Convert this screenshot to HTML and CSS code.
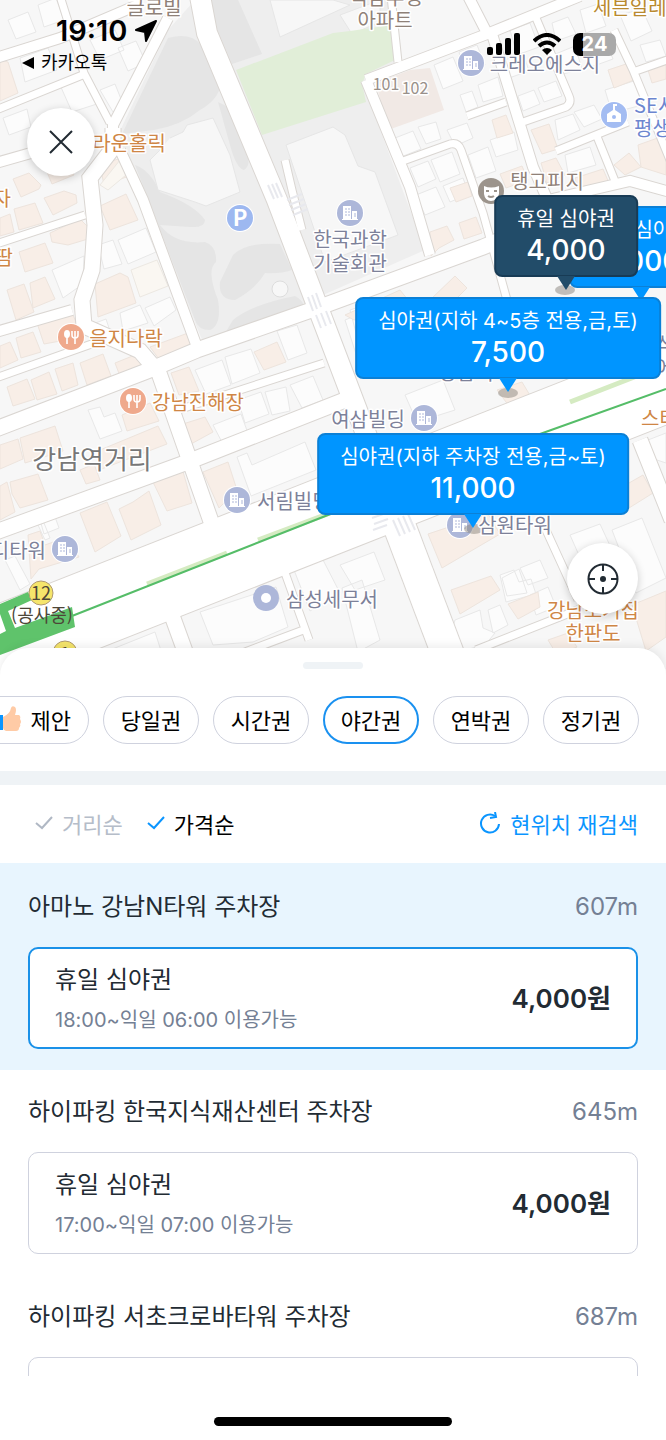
FILE: index.html
```
<!DOCTYPE html>
<html lang="ko">
<head>
  <meta charset="UTF-8" />
  <meta name="viewport" content="width=device-width, initial-scale=1.0" />
  <title>주차권 찾기</title>
  <link rel="stylesheet" href="styles.css">
</head>
<body>
  <div class="map">
    <svg class="map-canvas" viewBox="0 0 666 669" preserveAspectRatio="xMidYMin slice">
      <defs>
        <g id="building">
          <circle r="14" fill="#fff" />
          <circle r="13" fill="#adb7d9" />
          <path fill="#fff" d="M-7-7h8v13h-8zM2-2h5v8H2zM-8 6H8v1H-8z" />
          <path stroke="#adb7d9" stroke-width="1" d="M-5-4h2M-2-4h2M-5-1h2M-2-1h2M-5 2h2M-2 2h2M4 1h2M4 3h2" />
        </g>
        <g id="food">
          <circle r="14" fill="#fff" />
          <circle r="13" fill="#efa98c" />
          <ellipse cx="-4" cy="-3" rx="3" ry="4" fill="#fff" />
          <path fill="none" stroke="#fff" stroke-width="1.6" d="M-4 0V7M4-6V7M1-6v4q0 3 3 3t3-3v-4" />
        </g>
        <!-- streets, drawn twice: casing then surface -->
        <g id="narrow" fill="none">
          <path d="M60-4L84 73 110 123M-4 110L85 74M-4 244L85 215M-4 378L100 341M178 410L324 363M391-4L398 62M403 161L450 144Q458 142 461 150L483 213 507 300M467 116L506 102M523 122L566 107Q572 103 569 96L536 18M556 151L628 122M596 134L617 186M614 30L633 70 670 160M633 72L670 59M546 530L578 600M476 650L580 609M284 570L309 640M245 652L306 629M285 160L292 190 302 230" />
        </g>
        <g id="middle" fill="none">
          <path d="M-4 58L60 38 140 4M-4 163L45 149M168 18L113 125V150M366 80L487 34 580-4M366 80L410 187 430 255M468-4L487 33M492 34L533 167 552 210M120 150L143 200 197 347M-4 332L72 310M548 200L630 181 670 192" />
        </g>
        <g id="wide" fill="none">
          <path d="M113 128V148L90 178 95 225 92 270 82 300 84 326 140 351 159 373 186 450 214 530M-4 429L147 371 197 350 320 307 483 247 560 215M-4 532L185 463 345 400M640 440L672 520M170 610L190 665" />
        </g>
        <g id="main" fill="none">
          <path d="M200-4L207 33 277 200 320 313 395 510" />
        </g>
      </defs>

      <rect width="666" height="669" fill="#f7f7f7" />

      <!-- apartment grounds and park -->
      <path fill="#eeeeee" d="M195 0H392L398 60 366 80 372 108 425 250 205 347 118 135 168 30z" />
      <path fill="#e5e5e5" d="M168 38Q190 32 200 44L222 76Q222 98 200 110 182 125 154 130L122 134zM205 0H238L262 54 232 64zM218 102Q240 110 246 150 252 165 244 170 236 168 230 145zM135 165Q150 170 160 192 195 205 205 220 205 228 190 227L160 225Q175 245 205 242 217 246 216 262 206 270 218 300 222 325 210 330 198 330 195 320zM233 255Q245 242 280 244L292 270Q280 274 265 273 255 290 235 300 218 300 220 282zM233 320Q250 305 295 296 306 302 302 308L222 338z" />
      <path fill="#f7f7f7" stroke="#e6e6e6" d="M170 138L183 132 187 125 213 118 230 155 240 192 206 206 195 202 158 190 150 160 160 150M286 145L333 127 345 135 358 166 375 172 398 235 325 262zM270 0L280 37 350 5 333 0zM340 15L380 0V22L352 34z" />
      <circle cx="280" cy="289" r="8" fill="#f7f7f7" stroke="#ddd" />
      <path fill="#e1eed8" d="M236 70L333 33 350 31 392 25 397 59 366 74 362 84 366 102 262 135z" />
      <path fill="#f1e9e5" d="M376 83L410 70 430 68 444 110 388 130z" />

      <!-- plain buildings -->
      <path fill="#fcfcfc" stroke="#e8e8e8" d="M8 20l20-8 8 20-20 7zM38 5l18-7 8 22-20 7zM20 58l28-10 9 22-32 12zM118 48l18-7 10 22-18 8zM60 85l28-10 12 28-28 9zM90 40l25-10 9 20-24 10zM3 118l24-9 4 18-22 8zM100 90l15-6 8 20-10 8zM52 270l32-14-1 28-20 14zM118 240l28-12 10 24-28 12zM98 245l15-5 9 24-18 5zM120 313l20-8 8 18-25 8zM145 308l25-11 6 13-22 16zM90 325l16-6 8 24-13 2zM195 370l27-10 9 25-25 9zM225 357l26-8 9 24-28 11zM277 331l20-6 10 28-19 7zM290 385l23-9 10 24-21 8zM265 392l21-5 4 24-18 4zM238 400l23-8 8 22-24 9zM88 410l12-3 4 10 11-4 7 18-22 8zM213 425l28-11 8 22-25 10zM237 457l10-4 5 12 53-23 11 28-65 26zM40 520l14-6 5 14-15 6zM38 525l6-2 6 15-5 2zM5 560l10-4 15 28-10 6zM200 612l76-25 12 40-35 15-40 3zM294 570l28-12 18 35-30 18zM110 650l45-18 8 25-40 5zM340 565l34-13 11 28-30 10zM380 640l-18-60-20 8 16 64zM434 65l19-8 10 24-20 8zM459 52l18-7 8 20-20 8zM460 95l12-4 6 16-12 5zM478 85l20-8 5 19-20 6zM395 138l18-7 8 18-20 8zM418 127l18-5 5 17-15 5zM447 130l20-7 6 15-18 8zM468 155l20-8 8 24-20 7zM490 140l24-8 4 18-22 7zM505 60l18-7 6 18-20 7zM510 30l20-7 9 24-22 8zM518 96l16-6 6 14-17 7zM538 88l18-7 6 15-18 6zM552 23l16-6 8 17-20 7zM580 10l18-6 8 22-20 7zM553 55l22-9 7 23-23 6zM582 45l22-8 9 22-22 8zM555 120l18-6 7 16-22 10zM574 112l20-7 8 14-18 8zM605 90l32-10 5 25-30 8zM620 15l22-6 10 22-21 10zM640 45l20-5 6 16-20 6zM565 155l25-8 6 18-28 8zM410 168l18-7 8 18-18 8zM431 160l21-8 8 22-20 8zM416 195l20-8 9 20-20 8zM443 186l20-8 6 16-19 8zM350 310l50-17 12 35-52 20zM345 320l20-8 15 40-22 8zM405 395l38-15 12 30-38 12zM500 575l14-5 5 12 12-3 5 15-30 8zM502 578l17-9 8 24-20 3zM520 568l20-8 8 18-20 7zM455 620l25-10 3 18 12 5-10 12-40 10zM488 610l12-5 8 20-15 8zM530 595l18-8 8 20-20 8zM570 535l30-11 12 26-30 12zM612 530l30-12 24 60-30 15zM648 440l18-7v30l-12-4z" />

      <!-- shops -->
      <path fill="#f8eee7" stroke="#ede4dd" d="M0 60L8 62 18 93 0 101zM13 179l16-6 12 12-2 4-18 8zM42 160l22-7 10 22-22 9zM14 209l21-6 8 20-24 7zM44 198l20-7 12 4 1 8-24 12zM0 218l10-4 4 18-14 4zM50 233l30-14 10 10-2 10-20 6-16-3zM100 206l26-12 12 26-28 10zM19 252l26-9 8 20-28 9zM30 283l15-6 10 22-22 9zM7 290l17-6 10 28-18 8zM95 284l25-11 8 4 8 26-38 14zM100 165l24-8 8 18-28 10zM37 323l36-8 9 22-38 7zM16 338l17-6 8 20-20 6zM0 346l10-4 8 18-18 8zM7 387l20-8 8 20-22 7zM31 380l18-8 8 22-20 6zM55 369l18-6 5 22-16 6zM80 363l23-9 8 22-24 9zM115 363l20-8 7 4v10l-22 7zM150 347l38-14 4 14-33 12zM171 373l18-6 10 24-20 4zM254 352l23-10 9 20-22 8zM183 424l22-7 8 15-22 12zM122 415l28-12 9 18-32 10zM0 445l18-6 5 20-23 10zM20 438l35-12 8 25-38 12zM100 450l58-24 9 18-68 26zM80 470l14-6 6 16-14 4zM0 486l7-4 8 30-15 8zM10 482l28-8 10 26-28 8-8-14zM28 535l12-4 5 14 22-8 12 20-40 12-8 10zM80 513l27-11 14 34-26 16zM119 509l14-7 16-11 12 34-30 15zM152 480l30-12 10 35-25 8zM203 472l25-10 9 28-18 18zM430 232l17-6 7 14-15 8-8 8zM450 188l18-6 4 14-16 6zM459 223l17-6 6 16-18 6zM492 120l14-5 7 18-16 5zM500 174l22-8 6 14-22 8zM531 130l18-6 9 25-16 5zM541 163l15-5 9 17-18 8zM575 178l28-9 6 14-32 8zM614 165l15-12 12 14-16 8zM608 70l18-6 8 16-20 8zM648 70l18-6v15l-14 4zM638 145l28-10v40l-25-8zM345 315l55-25 12 15-58 15zM430 300l25-24 12 12-15 15zM497 390l25-8 12 20-22 8zM428 534l60-20 12 20-58 34zM451 590l40-14 9 14-40 24zM508 604l30-12 2 15-22 12zM608 495l35-20 10 18-32 20zM632 605l34-14v46l-20 14zM548 640l20-7 9 14-20 8z" />
      <path fill="#faf7f2" stroke="#ece8e2" d="M131 270l26-10 11 26-28 11zM100 185l20-25 12 10-24 20z" />

      <g class="road-casing">
        <use href="#narrow" class="w-narrow" />
        <use href="#middle" class="w-middle" />
        <use href="#wide" class="w-wide" />
        <use href="#main" class="w-main" />
        <path class="w-trunk" d="M-40 661L706 367" />
        <path class="w-side" d="M382 480L452 665" />
      </g>
      <g class="road">
        <use href="#narrow" class="w-narrow" />
        <use href="#middle" class="w-middle" />
        <use href="#wide" class="w-wide" />
        <use href="#main" class="w-main" />
        <path class="w-trunk" d="M-40 661L706 367" />
        <path class="w-side" d="M382 480L452 665" />
      </g>

      <!-- crossings -->
      <g stroke="#e8e9ee" stroke-width="2">
        <path d="M268 185l6 14M272 184l6 14M276 183l6 14M287 200l15-6M289 205l15-6M291 210l15-6M293 215l15-6M308 297l5 14M312 295l5 14M316 293l5 14M316 315l5 13M321 313l5 13M326 311l5 13M373 530l14-5M374 524l14-5M372 518l14-5M393 520l7 16M398 518l7 16M403 516l7 16M408 514l7 16" />
      </g>

      <!-- subway line -->
      <path fill="none" stroke="#d5ebc2" stroke-width="5" d="M147 584L227 553M258 540L330 513M570 402L642 374" />
      <path fill="none" stroke="#55bd68" stroke-width="2" d="M72 616L333 513 540 434 666 389" />
      <path fill="#5fc36b" d="M0 604L28 592 32 600 8 611 15 628 72 607 75 627 0 655V634L6 631 0 614z" />

      <g fill="#8b857e" opacity=".5">
        <ellipse cx="565" cy="290" rx="10" ry="5" />
        <ellipse cx="508" cy="393" rx="10" ry="5" />
      </g>

      <use href="#building" x="471" y="63" />
      <use href="#building" x="350" y="213" />
      <use href="#building" x="424" y="418" />
      <use href="#building" x="237" y="500" />
      <use href="#building" x="65" y="549" />
      <use href="#building" x="460" y="525" />
      <use href="#food" x="71" y="337" />
      <use href="#food" x="133" y="401" />
      <ellipse cx="474" cy="529" rx="10" ry="5" fill="#8b857e" opacity=".5" />
      <circle cx="266" cy="598" r="13" fill="#adb7d9" />
      <circle cx="266" cy="598" r="5" fill="#fff" />
      <circle cx="240" cy="218" r="14" fill="#fff" />
      <circle cx="240" cy="218" r="13" fill="#9db8f0" />
      <circle cx="614" cy="115" r="14" fill="#fff" />
      <circle cx="614" cy="115" r="13" fill="#a3bcf2" />
      <path fill="#fff" d="M607 114l6-4v-6h4v2h-2v4l6 4v8h-14z" />
      <circle cx="614" cy="117" r="2" fill="#a3bcf2" />
      <circle cx="491" cy="191" r="13" fill="#9c948c" />
      <path fill="#fff" d="M484 186q7 3 15 0v8q-2 7-8 7t-7-7z" />
      <path fill="none" stroke="#9c948c" stroke-width="2" d="M486 191h3M494 191h3M488 196q3 2 6 0" />
      <g fill="#f5e56b" stroke="#b09a72">
        <circle cx="41" cy="593" r="12" />
        <circle cx="65" cy="653" r="12" />
      </g>

      <g class="place">
        <text x="240" y="226" class="parking">P</text>
        <text x="154" y="15" class="brown">글로빌</text>
        <text x="386" y="5" class="brown">역삼푸정</text>
        <text x="385" y="28" class="brown">아파트</text>
        <text x="593" y="15" class="gold start">세븐일레븐</text>
        <text x="545" y="72">크레오에스지</text>
        <text x="386" y="90" class="number">101</text>
        <text x="415" y="94" class="number">102</text>
        <text x="634" y="113" class="blue start">SE서울</text>
        <text x="634" y="136" class="blue start">평생교육</text>
        <text x="547" y="189" class="brown">탱고피지</text>
        <text x="129" y="151" class="orange">라운홀릭</text>
        <text x="11" y="206" class="orange end">피자</text>
        <text x="13" y="265" class="orange end">쌈땀</text>
        <text x="350" y="247">한국과학</text>
        <text x="350" y="271">기술회관</text>
        <text x="126" y="346" class="orange">을지다락</text>
        <text x="198" y="410" class="orange">강남진해장</text>
        <text x="368" y="427">여삼빌딩</text>
        <text x="466" y="380">강남역</text>
        <text x="92" y="469" class="district">강남역거리</text>
        <text x="257" y="509" class="start">서림빌딩</text>
        <text x="46" y="558" class="end">디타워</text>
        <text x="515" y="533">삼원타워</text>
        <text x="332" y="607">삼성세무서</text>
        <text x="641" y="426" class="orange start">스타벅스</text>
        <text x="656" y="352" class="start">식당</text>
        <text x="656" y="375" class="start">에스</text>
        <text x="593" y="618" class="orange">강남소거집</text>
        <text x="593" y="641" class="orange">한판도</text>
        <text x="41" y="600" class="exit">12</text>
        <text x="42" y="622" class="exit-note">(공사중)</text>
        <text x="65" y="661" class="exit">1</text>
      </g>
    </svg>

    <div class="status-bar">
      <div class="status-left">
        <div class="clock">19:10
          <svg width="22" height="22" viewBox="0 0 22 22"><path d="M21 1L11 21 10 12 1 10z" stroke="#000" stroke-width="2" stroke-linejoin="round" /></svg>
        </div>
        <a class="back-app" href="#">
          <svg width="12" height="12" viewBox="0 0 12 12"><path d="M0 6L12 0V12z" /></svg>
          카카오톡
        </a>
      </div>
      <div class="status-right">
        <svg width="34" height="22" viewBox="0 0 34 22"><rect y="14" width="6" height="8" rx="2" /><rect x="9" y="10" width="6" height="12" rx="2" /><rect x="18" y="5" width="6" height="17" rx="2" /><rect x="27" width="6" height="22" rx="2" /></svg>
        <svg width="28" height="22" viewBox="0 0 28 22" fill="none" stroke="#000" stroke-width="4"><path d="M1 8Q14-4 27 8M6 13Q14 6 22 13" /><path d="M9 17Q14 13 19 17L14 22z" fill="#000" stroke="none" /></svg>
        <div class="battery"><span>24</span></div>
      </div>
    </div>

    <button class="round-btn close" aria-label="닫기">
      <svg width="24" height="24" viewBox="0 0 24 24" fill="none" stroke="#222b33" stroke-width="2"><path d="M1 1L23 23M23 1L1 23" /></svg>
    </button>

    <button class="bubble pin-back"><span>휴일 심야권</span><b>5,000</b></button>
    <button class="bubble dark pin-selected"><span>휴일 심야권</span><b>4,000</b></button>
    <button class="bubble pin-friday"><span>심야권(지하 4~5층 전용,금,토)</span><b>7,500</b></button>
    <button class="bubble pin-weekend"><span>심야권(지하 주차장 전용,금~토)</span><b>11,000</b></button>

    <button class="round-btn locate" aria-label="내 위치">
      <svg width="32" height="32" viewBox="0 0 32 32" fill="none" stroke="#222b33" stroke-width="2"><circle cx="16" cy="16" r="14.500" /><path d="M16 1V8M16 24V31M1 16H8M24 16H31" /><circle cx="16" cy="16" r="3" fill="#222b33" stroke="none" /></svg>
    </button>
  </div>

  <div class="sheet">
    <div class="handle"></div>
    <div class="chips">
      <button class="chip suggest">
        <svg width="30" height="26" viewBox="0 0 30 26"><path fill="#0a95ff" d="M0 9H12V24H0z" /><path fill="#ffcba6" d="M12 11Q19 8 20 2 21-1 24 1 26 3 24 9H28Q30 10 29 13 31 16 29 18 30 20 28 22 28 25 25 25H15Q12 24 12 22z" /></svg>
        제안
      </button>
      <button class="chip">당일권</button>
      <button class="chip">시간권</button>
      <button class="chip active">야간권</button>
      <button class="chip">연박권</button>
      <button class="chip">정기권</button>
    </div>

    <div class="sort-bar">
      <button class="sort">
        <svg width="18" height="14" viewBox="0 0 18 14"><path d="M1 7L7 12 17 1" /></svg>거리순
      </button>
      <button class="sort on">
        <svg width="18" height="14" viewBox="0 0 18 14"><path d="M1 7L7 12 17 1" /></svg>가격순
      </button>
      <button class="refresh">
        <svg width="22" height="22" viewBox="0 0 22 22" fill="none" stroke="#0a95ff" stroke-width="2"><path d="M20 12A9 9 0 1 1 16 4" /><path d="M16 0L17 5 11 6" /></svg>현위치 재검색
      </button>
    </div>

    <div class="list">
      <div class="lot selected">
        <div class="lot-head"><h2>아마노 강남N타워 주차장</h2><span>607m</span></div>
        <a class="ticket" href="#">
          <div><h3>휴일 심야권</h3><p>18:00~익일 06:00 이용가능</p></div>
          <strong>4,000원</strong>
        </a>
      </div>
      <div class="lot">
        <div class="lot-head"><h2>하이파킹 한국지식재산센터 주차장</h2><span>645m</span></div>
        <a class="ticket" href="#">
          <div><h3>휴일 심야권</h3><p>17:00~익일 07:00 이용가능</p></div>
          <strong>4,000원</strong>
        </a>
      </div>
      <div class="lot">
        <div class="lot-head"><h2>하이파킹 서초크로바타워 주차장</h2><span>687m</span></div>
        <a class="ticket" href="#" aria-label="주차권"></a>
      </div>
    </div>

    <div class="home-bar"><i></i></div>
  </div>
</body>
</html>
```

FILE: styles.css
```
* {
  margin: 0;
  padding: 0;
  box-sizing: border-box;
}

body {
  display: flex;
  flex-direction: column;
  height: 100vh;
  overflow: hidden;
  background: #fff;
  color: #222b33;
  font-family: Inter, "Noto Sans CJK KR", sans-serif;
}

button {
  border: none;
  background: none;
  font-family: inherit;
  color: inherit;
  cursor: pointer;
}

a {
  color: inherit;
  text-decoration: none;
}

/* map */
.map {
  position: relative;
  flex: none;
  overflow: hidden;
}

.map-canvas {
  display: block;
  width: 100%;
  height: 669px;
}

.road-casing {
  fill: none;
  stroke: #dad6d2;
}

.road {
  fill: none;
  stroke: #fff;
}

.road .w-narrow { stroke-width: 7px; }
.road .w-middle { stroke-width: 10px; }
.road .w-wide { stroke-width: 15px; }
.road .w-main { stroke-width: 20px; }
.road .w-side { stroke-width: 32px; }
.road .w-trunk { stroke-width: 78px; }
.road-casing .w-narrow { stroke-width: 9px; }
.road-casing .w-middle { stroke-width: 12px; }
.road-casing .w-wide { stroke-width: 17px; }
.road-casing .w-main { stroke-width: 22px; }
.road-casing .w-side { stroke-width: 34px; }
.road-casing .w-trunk { stroke-width: 80px; }

.place text {
  font-family: "Noto Sans CJK KR", sans-serif;
  font-size: 20px;
  font-weight: 400;
  fill: #7d8199;
  stroke: #fff;
  stroke-width: 3px;
  stroke-linejoin: round;
  paint-order: stroke;
  text-anchor: middle;
}

.place .start { text-anchor: start; }
.place .end { text-anchor: end; }
.place .brown { fill: #8f8178; }
.place .orange { fill: #cf8645; }
.place .gold { fill: #b98a2f; }
.place .blue { fill: #6c86cf; }

.place .number {
  font-size: 16px;
  fill: #99908a;
}

.place .district {
  font-size: 26px;
  fill: #777;
}

.place .exit,
.place .exit-note {
  font-size: 18px;
  fill: #4d4638;
  stroke: none;
}

.place .parking {
  font-size: 22px;
  font-weight: 700;
  fill: #fff;
  stroke: none;
}

/* status bar */
.status-bar {
  position: absolute;
  top: 0;
  left: 0;
  right: 0;
  display: flex;
  justify-content: space-between;
  padding: 14px 50px 0 22px;
  color: #000;
}

.clock {
  display: flex;
  align-items: center;
  gap: 8px;
  padding-left: 34px;
  font-size: 29px;
  font-weight: 600;
  line-height: 34px;
}

.back-app {
  display: flex;
  align-items: center;
  gap: 7px;
  font-size: 18px;
  font-weight: 400;
  line-height: 30px;
}

.status-right {
  display: flex;
  align-items: center;
  gap: 12px;
  height: 60px;
}

.battery {
  width: 43px;
  border-radius: 7px;
  background: linear-gradient(90deg, #000 24%, #a9a9a9 24%);
  color: #fff;
  font-size: 20px;
  font-weight: 700;
  line-height: 23px;
  text-align: center;
}

.round-btn {
  position: absolute;
  display: flex;
  align-items: center;
  justify-content: center;
  border-radius: 50%;
  background: #fff;
  box-shadow: 0 2px 8px rgba(0, 0, 0, 0.2);
}

.close {
  top: 108px;
  left: 27px;
  width: 68px;
  height: 68px;
}

.locate {
  top: 543px;
  right: 28px;
  width: 71px;
  height: 71px;
}

.bubble {
  position: absolute;
  display: flex;
  flex-direction: column;
  align-items: center;
  height: 82px;
  padding: 7px 21px 0;
  border: 2px solid #0b80d6;
  border-radius: 8px;
  background: #0095ff;
  color: #fff;
  font-size: 20px;
  line-height: 30px;
  white-space: nowrap;
  transform: translateX(-50%);
}

.bubble b {
  font-size: 28px;
  font-weight: 500;
  line-height: 32px;
}

.bubble::after {
  content: "";
  position: absolute;
  top: 79px;
  left: 50%;
  width: 18px;
  height: 14px;
  margin-left: -9px;
  background: inherit;
  clip-path: polygon(0 0, 100% 0, 50% 100%);
}

.dark {
  border-color: #183b55;
  background: #224c69;
}

.pin-back { top: 206px; left: 641px; }
.pin-selected { top: 195px; left: 566px; }
.pin-friday { top: 297px; left: 508px; }
.pin-weekend { top: 433px; left: 473px; }

/* bottom sheet */
.sheet {
  position: relative;
  display: flex;
  flex-direction: column;
  flex: 1;
  min-height: 0;
  margin-top: -21px;
  border-radius: 28px 28px 0 0;
  background: #fff;
  box-shadow: 0 -2px 10px rgba(0, 0, 0, 0.08);
}

.handle {
  flex: none;
  width: 60px;
  height: 7px;
  margin: 14px auto 27px;
  border-radius: 4px;
  background: #eff3f6;
}

.chips {
  display: flex;
  flex: none;
  justify-content: flex-end;
  gap: 14px;
  padding: 0 27px 27px;
  overflow: hidden;
  border-bottom: 14px solid #eff3f6;
}

.chip {
  flex: none;
  width: 96px;
  height: 48px;
  padding-bottom: 2px;
  border: 1px solid #cfd2de;
  border-radius: 24px;
  background: #fff;
  color: #000;
  font-size: 22px;
}

.chip.active {
  border: 2px solid #1a91f0;
}

.suggest {
  display: flex;
  align-items: center;
  justify-content: flex-end;
  gap: 10px;
  width: 124px;
  padding-right: 17px;
}

.sort-bar {
  display: flex;
  flex: none;
  align-items: center;
  gap: 24px;
  height: 78px;
  padding: 0 28px 2px 35px;
}

.sort,
.refresh {
  display: flex;
  align-items: center;
  gap: 9px;
  font-size: 22px;
}

.sort {
  color: #b5bdc9;
}

.sort svg {
  fill: none;
  stroke: #b0b8c4;
  stroke-width: 2px;
}

.sort.on {
  color: #000;
}

.sort.on svg {
  stroke: #0a95ff;
}

.refresh {
  margin-left: auto;
  color: #0a95ff;
}

.list {
  flex: 1;
  min-height: 0;
  overflow: hidden;
}

.lot {
  padding: 24px 28px 21px;
}

.lot.selected {
  padding-top: 26px;
  background: #e8f5fe;
}

.lot-head {
  display: flex;
  align-items: center;
  justify-content: space-between;
  margin-bottom: 22px;
  line-height: 36px;
}

.lot-head h2,
.ticket h3 {
  font-size: 24px;
  font-weight: 400;
}

.lot-head span {
  color: #748094;
  font-size: 24px;
}

.ticket {
  display: flex;
  align-items: center;
  justify-content: space-between;
  height: 102px;
  padding: 0 26px;
  border: 1px solid #cfd2de;
  border-radius: 10px;
  background: #fff;
}

.selected .ticket {
  padding: 0 25px;
  border: 2px solid #1a91e8;
}

.ticket div {
  padding-top: 4px;
}

.ticket h3 {
  line-height: 40px;
}

.ticket p {
  color: #748094;
  font-size: 20px;
  line-height: 40px;
}

.ticket strong {
  padding-bottom: 4px;
  font-size: 26px;
  font-weight: 600;
}

.home-bar {
  display: flex;
  flex: none;
  align-items: center;
  justify-content: center;
  height: 64px;
  padding-top: 26px;
}

.home-bar i {
  width: 238px;
  height: 9px;
  border-radius: 5px;
  background: #000;
}
```
